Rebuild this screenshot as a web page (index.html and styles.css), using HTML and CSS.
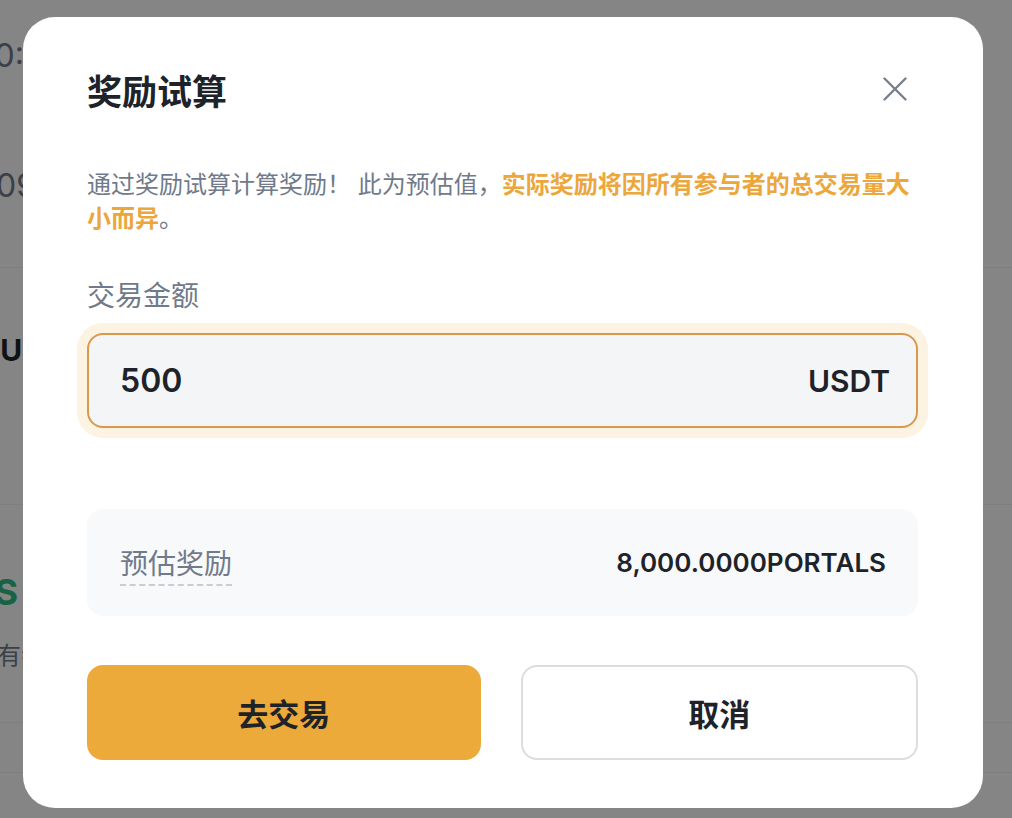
FILE: index.html
```
<!DOCTYPE html>
<html lang="zh-CN">
<head>
    <meta charset="UTF-8">
    <meta name="viewport" content="width=device-width, initial-scale=1.0">
    <title>奖励试算</title>
    <link rel="stylesheet" href="styles.css">
</head>
<body>

    <!-- page behind the dialog, mostly covered -->
    <div class="page">
        <div class="page-row row-time">
            <span class="clip time">10:00:</span>
        </div>
        <div class="page-row row-date">
            <span class="clip date">2024-03-09</span>
        </div>
        <div class="page-row row-pair">
            <span class="pair">PORTALS/USDT</span>
        </div>
        <div class="page-row row-reward">
            <span class="clip reward">8,000,000 PORTALS</span>
            <span class="reward-note">所有参与者</span>
        </div>
        <div class="page-row row-last"></div>
    </div>

    <div class="overlay">
        <div class="modal">
            <div class="modal-header">
                <h2 class="modal-title">奖励试算</h2>
                <button class="close-btn" aria-label="关闭">
                    <svg width="24" height="24" viewBox="0 0 24 24" fill="none">
                        <path d="M1.5 1.5L22.5 22.5M22.5 1.5L1.5 22.5" stroke="#76808e" stroke-width="2.4" stroke-linecap="round"/>
                    </svg>
                </button>
            </div>

            <p class="modal-desc">通过奖励试算计算奖励！ 此为预估值，<span class="highlight">实际奖励将因所有参与者的总交易量大小而异</span>。</p>

            <label class="field-label" for="amount">交易金额</label>
            <div class="amount-field">
                <input type="text" id="amount" class="amount-input" value="500">
                <span class="amount-unit">USDT</span>
            </div>

            <div class="estimate">
                <span class="estimate-label">预估奖励</span>
                <span class="estimate-value">8,000.0000PORTALS</span>
            </div>

            <div class="actions">
                <button class="btn btn-primary">去交易</button>
                <button class="btn btn-secondary">取消</button>
            </div>
        </div>
    </div>

</body>
</html>
```

FILE: styles.css
```
body {
    margin: 0;
    font-family: "Inter", "Noto Sans CJK SC", sans-serif;
    background-color: #ffffff;
    color: #1e2329;
    overflow: hidden;
}

/* page underneath */
.page {
    height: 818px;
    display: flex;
    flex-direction: column;
}

.page-row {
    display: flex;
    flex-direction: column;
    align-items: flex-start;
    border-bottom: 1px solid #f0f1f3;
    overflow: hidden;
}

.row-time {
    height: 120px;
    border-bottom: none;
}

.row-date {
    height: 147px;
}

.row-pair {
    height: 236px;
}

.row-reward {
    height: 217px;
}

.row-last {
    height: 49px;
}

/* right-aligned text whose end peeks out left of the dialog */
.clip {
    display: block;
    width: 500px;
    text-align: right;
    white-space: nowrap;
}

.time {
    margin: 36px 0 0 -476px;
    font-size: 32px;
    line-height: 39px;
    color: #707a8a;
}

.date {
    margin: 46px 0 0 -464px;
    font-size: 32px;
    line-height: 39px;
    color: #707a8a;
}

.pair {
    margin: 64px 0 0 -150px;
    font-size: 30px;
    line-height: 36px;
    font-weight: 700;
    white-space: nowrap;
}

.reward {
    margin: 64px 0 0 -482px;
    font-size: 36px;
    line-height: 46px;
    font-weight: 700;
    color: #2ebd85;
}

.reward-note {
    margin: 26px 0 0 -27px;
    font-size: 24px;
    line-height: 29px;
    color: #707a8a;
    white-space: nowrap;
}

/* dialog */
.overlay {
    position: fixed;
    inset: 0;
    background-color: rgba(0, 0, 0, 0.48);
    display: flex;
    align-items: flex-start;
    padding: 17px 0 0 23px;
}

.modal {
    width: 960px;
    height: 791px;
    box-sizing: border-box;
    background-color: #fff;
    border-radius: 32px;
    padding: 51px 65px 48px 64px;
    display: flex;
    flex-direction: column;
}

.modal > * {
    flex-shrink: 0;
}

.modal-header {
    display: flex;
    justify-content: space-between;
    align-items: center;
    height: 48px;
}

.modal-title {
    margin: 0;
    font-size: 35px;
    font-weight: 700;
    line-height: 48px;
    color: #1e2329;
}

.close-btn {
    border: none;
    background: none;
    padding: 0;
    margin: -6px 11px 0 0;
    width: 24px;
    height: 24px;
    cursor: pointer;
}

.modal-desc {
    margin: 52px 0 0;
    font-size: 24px;
    line-height: 34px;
    color: #707a8a;
}

.highlight {
    color: #eba63c;
    font-weight: 700;
}

.field-label {
    display: block;
    margin-top: 40px;
    font-size: 28px;
    line-height: 40px;
    color: #707a8a;
}

.amount-field {
    margin-top: 17px;
    height: 95px;
    box-sizing: border-box;
    display: flex;
    align-items: center;
    padding: 0 26px 0 31px;
    background-color: #f4f5f7;
    border: 2px solid #d9994c;
    border-radius: 16px;
    box-shadow: 0 0 0 10px #fdf3e3;
}

.amount-input {
    flex: 1;
    min-width: 0;
    border: none;
    outline: none;
    background: transparent;
    padding: 0;
    font-family: "Inter", "Noto Sans CJK SC", sans-serif;
    font-size: 32px;
    font-weight: 600;
    color: #1e2329;
}

.amount-unit {
    font-size: 30px;
    font-weight: 600;
    color: #1e2329;
}

.estimate {
    margin-top: 81px;
    height: 107px;
    display: flex;
    justify-content: space-between;
    align-items: center;
    padding: 0 32px 0 33px;
    background-color: #f8f9fb;
    border-radius: 16px;
}

.estimate-label {
    font-size: 28px;
    line-height: 36px;
    color: #707a8a;
    padding-bottom: 2px;
    border-bottom: 2px dashed #c9cdd3;
    margin-top: 6px;
}

.estimate-value {
    font-size: 26px;
    font-weight: 600;
    color: #1e2329;
}

.actions {
    margin-top: 49px;
    display: flex;
    gap: 40px;
}

.btn {
    flex: 1;
    height: 95px;
    border-radius: 16px;
    font-family: "Inter", "Noto Sans CJK SC", sans-serif;
    font-size: 31px;
    font-weight: 700;
    color: #1e2329;
    cursor: pointer;
}

.btn-primary {
    background-color: #ecaa3b;
    border: none;
}

.btn-secondary {
    background-color: #fff;
    border: 2px solid #dcdde1;
}
```
